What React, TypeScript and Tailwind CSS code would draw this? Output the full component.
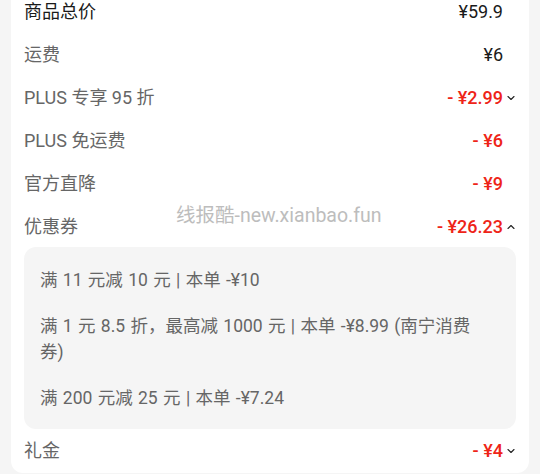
import { ChevronDown, ChevronUp } from "lucide-react";

type Row = {
  label: string;
  value: string;
  red?: boolean;
  dark?: boolean;
  arrow?: "down" | "up";
};

const rows: Row[] = [
  { label: "商品总价", value: "¥59.9", dark: true },
  { label: "运费", value: "¥6" },
  { label: "PLUS 专享 95 折", value: "- ¥2.99", red: true, arrow: "down" },
  { label: "PLUS 免运费", value: "- ¥6", red: true },
  { label: "官方直降", value: "- ¥9", red: true },
  { label: "优惠券", value: "- ¥26.23", red: true, arrow: "up" },
];

const coupons = [
  "满 11 元减 10 元 | 本单 -¥10",
  "满 1 元 8.5 折，最高减 1000 元 | 本单 -¥8.99 (南宁消费券)",
  "满 200 元减 25 元 | 本单 -¥7.24",
];

function PriceRow({ row }: { row: Row }) {
  return (
    <div className="h-[43px] flex items-center justify-between">
      <span
        className={
          row.dark
            ? "text-[18px] text-[#1a1a1a]"
            : "text-[18px] text-[#666666]"
        }
      >
        {row.label}
      </span>
      <div className="flex items-center">
        <span
          className={
            row.red
              ? "text-[18px] font-medium text-[#ee2418]"
              : "text-[18px] text-[#1a1a1a]"
          }
        >
          {row.value}
        </span>
        <span className="w-[14px] flex justify-end">
          {row.arrow === "down" && <ChevronDown size={12} strokeWidth={2.2} className="text-[#222]" />}
          {row.arrow === "up" && <ChevronUp size={12} strokeWidth={2.2} className="text-[#222]" />}
        </span>
      </div>
    </div>
  );
}

export default function App() {
  return (
    <div className="relative w-[540px] h-[474px] overflow-hidden bg-[#f5f5f5] px-[11px] font-['Roboto','Noto_Sans_CJK_SC',sans-serif]">
      <div className="-mt-[10px] bg-white rounded-b-[12px] pl-[13px] pr-[12px] pb-[1px]">
        {rows.map((r) => (
          <PriceRow key={r.label} row={r} />
        ))}

        <div className="mr-[1px] -mt-[1px] bg-[#f5f5f5] rounded-[12px] px-[16px] pt-[20px] pb-[18px] flex flex-col gap-[20px]">
          {coupons.map((c) => (
            <p key={c} className="max-w-[440px] text-[17.5px] leading-[26px] [word-spacing:1px] text-[#666666]">
              {c}
            </p>
          ))}
        </div>

        <PriceRow row={{ label: "礼金", value: "- ¥4", red: true, arrow: "down" }} />
      </div>

      <div className="absolute left-[176px] top-[201px] text-[19.5px] text-[#bdbdbd] pointer-events-none">
        线报酷-new.xianbao.fun
      </div>
    </div>
  );
}
